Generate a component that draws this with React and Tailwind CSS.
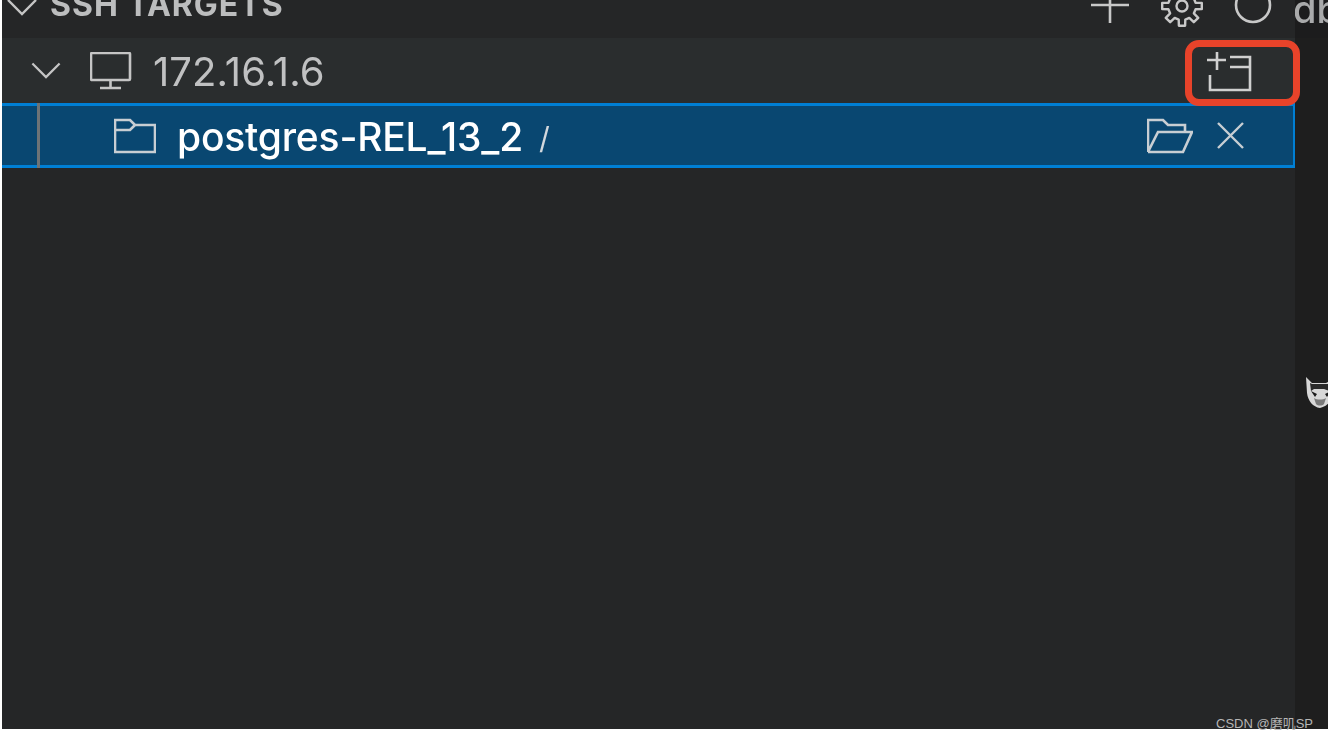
import React from "react";

function gearPath(cx, cy, outer, inner, teeth) {
  const pts = [];
  const step = (Math.PI * 2) / teeth;
  for (let i = 0; i < teeth; i++) {
    const a = i * step - Math.PI / 2;
    const w = step * 0.2;
    const w2 = step * 0.3;
    const add = (ang, r) => pts.push([cx + Math.cos(ang) * r, cy + Math.sin(ang) * r]);
    add(a - w2, inner);
    add(a - w, outer);
    add(a + w, outer);
    add(a + w2, inner);
  }
  return "M" + pts.map((p) => p[0].toFixed(1) + " " + p[1].toFixed(1)).join("L") + "Z";
}

export default function App() {
  return (
    <div className="relative w-[1328px] h-[740px] bg-white overflow-hidden font-['Inter','Liberation_Sans',sans-serif]">
      <div className="flex h-[729px] ml-[2px] blur-[0.5px]">
        <div className="w-[1293px] shrink-0 flex flex-col bg-[#252627]">
          {/* Section header */}
          <div className="h-[38px] flex items-start overflow-hidden relative">
            <svg className="w-[32px] h-[16px] ml-[4px] shrink-0" viewBox="0 0 32 16" fill="none" stroke="#c5c5c5" strokeWidth="2.4">
              <path d="M2 0 16 14 30 0" />
            </svg>
            <span className="ml-[12px] -mt-[14px] text-[32px] leading-[38px] font-bold tracking-[1px] text-[#bcbdbe] whitespace-nowrap">SSH TARGETS</span>
            <div className="ml-auto flex items-start shrink-0 mr-[23px]">
              <svg className="w-[40px] h-[24px]" viewBox="0 0 40 24" fill="none" stroke="#c8c8c8" strokeWidth="2.6">
                <path d="M20 0v23M1 5h38" />
              </svg>
              <svg className="ml-[31px] w-[42px] h-[28px]" viewBox="0 0 42 28" fill="none" stroke="#c8c8c8" strokeWidth="2.4">
                <circle cx="21" cy="6" r="5.5" />
                <path d={gearPath(21, 6, 20, 14, 8)} strokeLinejoin="round" />
              </svg>
              <svg className="ml-[31px] w-[38px] h-[26px]" viewBox="0 0 38 26" fill="none" stroke="#c8c8c8" strokeWidth="2.6">
                <circle cx="19" cy="5" r="17" />
              </svg>
            </div>
          </div>
          {/* Host row */}
          <div className="h-[65px] bg-[#2a2d2e] flex items-center relative">
            <svg className="ml-[29px] w-[30px] h-[17px] shrink-0" viewBox="0 0 32 18" fill="none" stroke="#c5c5c5" strokeWidth="2.4">
              <path d="M1.5 1.5 16 16 30.5 1.5" />
            </svg>
            <svg className="ml-[29px] w-[42px] h-[38px] shrink-0" viewBox="0 0 42 38" fill="none" stroke="#c5c5c5" strokeWidth="2.6">
              <rect x="1" y="1" width="39" height="27" rx="1" />
              <path d="M20.5 28v7M10 36h21" />
            </svg>
            <span className="ml-[21px] mt-[3px] text-[40px] leading-[44px] text-[#c0c1c2] tracking-[0.1px] whitespace-nowrap">172.16.1.6</span>
            <svg className="ml-auto mr-[43px] w-[46px] h-[42px] shrink-0" viewBox="0 0 46 42" fill="none" stroke="#d0d0d0" strokeWidth="2.6">
              <path d="M1 10h19M11 2v18M4 25v15h40V7H24M24 17h20" />
            </svg>
            <div className="absolute right-[-5px] top-[2px] w-[115px] h-[66px] rounded-[14px] border-[7px] border-[#e8432a] z-10" />
          </div>
          {/* Selected row */}
          <div className="h-[65px] bg-[#094771] border-y-[3px] border-r-[2px] border-[#007fd4] flex items-center relative">
            <div className="absolute left-[35px] -top-[3px] -bottom-[3px] w-[3px] bg-[#6e7376]" />
            <svg className="ml-[112px] w-[42px] h-[36px] shrink-0" viewBox="0 0 42 36" fill="none" stroke="#c8ced3" strokeWidth="2.6">
              <path d="M1 34V2h15l5 5h20v27zM1 12h15l5-5" />
            </svg>
            <span className="ml-[21px] mt-[2px] text-[39px] leading-[44px] font-medium text-white tracking-[-0.2px] whitespace-nowrap">postgres-REL_13_2</span>
            <span className="ml-[16px] mt-[5px] text-[30px] leading-[44px] text-[#d2d8dd]">/</span>
            <svg className="ml-auto w-[46px] h-[36px] shrink-0" viewBox="0 0 46 36" fill="none" stroke="#c8ced3" strokeWidth="2.6">
              <path d="M1 34V2h15l5 5h17v7M1 34h35l9-20H11L1 34" />
            </svg>
            <svg className="ml-[24px] mr-[49px] w-[27px] h-[27px] shrink-0" viewBox="0 0 27 27" fill="none" stroke="#c8ced3" strokeWidth="2.4">
              <path d="M1 1l25 25M26 1 1 26" />
            </svg>
          </div>
          <div className="flex-1" />
        </div>
        {/* Right column */}
        <div className="flex-1 min-w-0 flex flex-col bg-[#1e1e1e]">
          <div className="h-[38px] overflow-hidden bg-[#1c1c1d]">
            <span className="block -mt-[14px] -ml-[2px] text-[38px] leading-[46px] font-medium text-[#a9aaab] whitespace-nowrap">db</span>
          </div>
          <div className="mt-[339px] ml-[9px]">
            <svg className="w-[28px] h-[32px]" viewBox="0 0 28 32">
              <path d="M2 0 8 6h14l6-3v14c0 8-6 13-12 14C9 30 4 24 3 16z" fill="#d8d8d8" />
              <path d="M6 6 8 7h20v8L20 12H10l-3 2z" fill="#2a2a2a" />
              <path d="M7 14l6 3-2 3zM27 14l-6 3 2 3z" fill="#1a1a1a" />
              <path d="M10 21c3 2 9 2 12 0l-2 6c-2 2-6 2-8 0z" fill="#7a7a7a" />
            </svg>
          </div>
        </div>
      </div>
      <span className="absolute left-[1216px] top-[716px] text-[13px] leading-[15px] text-[#b5b5b5] font-['Liberation_Sans','Noto_Sans_CJK_SC',sans-serif] whitespace-nowrap">CSDN @磨叽SP</span>
    </div>
  );
}
